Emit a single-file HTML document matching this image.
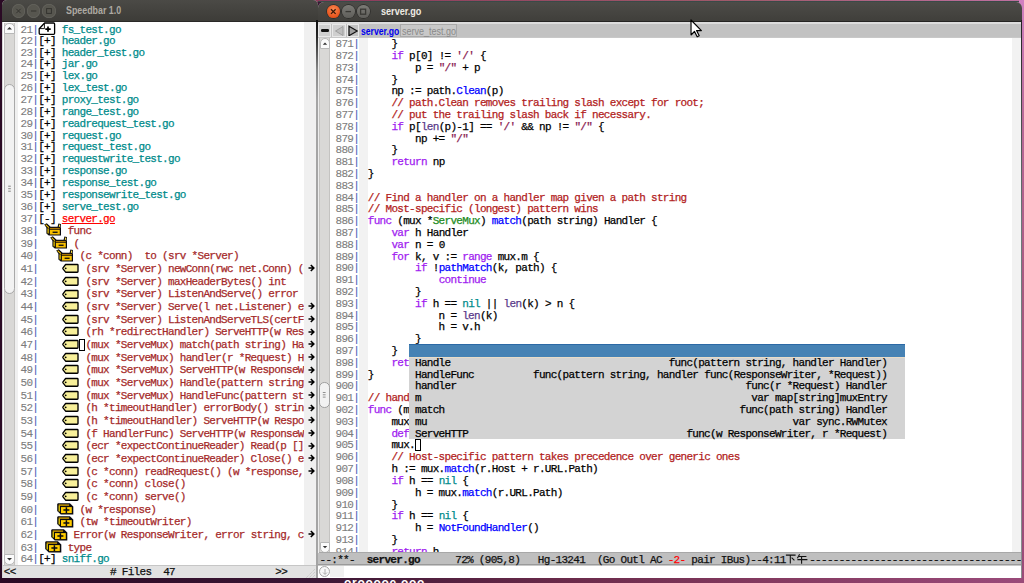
<!DOCTYPE html><html><head><meta charset="utf-8"><style>
*{margin:0;padding:0;box-sizing:border-box}
html,body{width:1024px;height:583px;overflow:hidden;background:#2d0b27;position:relative}
.a{position:absolute}
.m{position:absolute;font-family:"Liberation Mono", monospace;font-size:11.0px;letter-spacing:-0.7px;white-space:pre;line-height:12px;color:#000;-webkit-text-stroke-width:0.25px}
i{font-style:normal}
.k{color:#a020f0} .f{color:#0000ff} .t{color:#228b22} .c{color:#b22222} .s{color:#8b2252}
.n{color:#008b8b} .b{color:#5a3a8a} .g{color:#7c7c7c;-webkit-text-stroke-width:0.1px} .p{color:#4a5cb8;-webkit-text-stroke-width:0.1px}
.fn{color:#008b8b} .tg{color:#a52a2a} .sel{color:#ff0000;text-decoration:underline}
.sans{font-family:"Liberation Sans",sans-serif}
</style></head><body>
<div class="a" style="left:0;top:0;width:1024px;height:583px;background:linear-gradient(90deg,#2a0a24 0%,#3a1634 30%,#6a2a4a 55%,#843a60 75%,#9a4a7a 100%)"></div>
<div class="a" style="left:300px;top:0;width:724px;height:1.6px;background:linear-gradient(90deg,#8a3a5a,#a05a6a 60%,#c070a0)"></div>
<div class="a" style="left:318px;top:1.2px;width:703px;height:1px;background:#3a4a48"></div>
<div class="a" style="left:1019px;top:0;width:5px;height:583px;background:linear-gradient(180deg,#d080c0 0%,#b86a98 20%,#a85a80 50%,#9a4a78 100%)"></div>
<div class="a" style="left:2px;top:0;width:316px;height:578px;background:#d6d6d6;border-radius:5px 5px 0 0;overflow:hidden">
<div class="a" style="left:0;top:0;width:100%;height:22px;background:linear-gradient(180deg,#4b4a46,#3c3b37)"></div>
<div class="a" style="left:0;top:21px;width:100%;height:1px;background:#2a2927"></div>
</div>
<div class="a" style="left:11.9px;top:4.4px;width:13.2px;height:13.2px;border-radius:50%;background:#57564f;box-shadow:inset 0 0 0 0.8px #64635d"></div>
<div class="a" style="left:27.1px;top:4.4px;width:13.2px;height:13.2px;border-radius:50%;background:#57564f;box-shadow:inset 0 0 0 0.8px #64635d"></div>
<div class="a" style="left:42.4px;top:4.4px;width:13.2px;height:13.2px;border-radius:50%;background:#57564f;box-shadow:inset 0 0 0 0.8px #64635d"></div>
<svg class="a" style="left:0;top:0" width="80" height="22"><g stroke="#34332f" stroke-width="1.0" fill="none"><path d="M16.3 8.8 L20.7 13.2 M20.7 8.8 L16.3 13.2"/><path d="M31 11 L36.4 11"/><rect x="46.6" y="8.6" width="4.8" height="4.8"/></g></svg>
<div class="a sans" style="left:66.2px;top:4.8px;font-size:10px;line-height:11px;font-weight:bold;color:#aeaaa2;white-space:pre;transform:scaleX(0.885);transform-origin:0 0">Speedbar 1.0</div>
<div class="a" style="left:3px;top:22px;width:313px;height:543px;background:#fff"></div>
<div class="a" style="left:3.5px;top:22.5px;width:11.5px;height:542px;background:#d9d8d6;border-left:1px solid #c4c3c1;border-right:1px solid #c4c3c1"></div>
<div class="a" style="left:4px;top:22.5px;width:11px;height:11px;background:#fbfbfb;border:1px solid #b8b8b8;border-radius:5px 5px 0 0"></div>
<svg class="a" style="left:4px;top:22px" width="11" height="12"><path d="M3 7.5 L5.5 5 L8 7.5Z" fill="#333"/></svg>
<div class="a" style="left:4px;top:84.4px;width:11px;height:210px;background:#f2f2f2;border:1px solid #a9a9a9;border-radius:5.5px"></div>
<svg class="a" style="left:4px;top:180px" width="11" height="16"><g stroke="#7a7a7a" stroke-width="0.9"><path d="M4.2 6.2 L6.8 6.2 M4.2 8.7 L6.8 8.7 M4.2 11.2 L6.8 11.2"/></g></svg>
<div class="a" style="left:4px;top:554px;width:11px;height:11px;background:#fbfbfb;border:1px solid #b8b8b8;border-radius:0 0 5px 5px"></div>
<svg class="a" style="left:4px;top:554px" width="11" height="11"><path d="M3 4 L5.5 6.5 L8 4Z" fill="#333"/></svg>
<div class="a" style="left:15px;top:22px;width:3px;height:543px;background:#f0f0f0"></div>
<div class="a" style="left:304px;top:22px;width:11.5px;height:543px;background:#f0f0f0"></div>
<div class="a" style="left:315.8px;top:22px;width:1.2px;height:556px;background:#a8a8a8"></div>
<div class="a" style="left:3px;top:565px;width:313px;height:12.8px;background:#e2e2e2;border-top:1px solid #c6c6c6"></div>
<div class="m" style="left:3.8px;top:565.5px;color:#111">&lt;&lt;                # Files  47                 &gt;&gt;</div>
<svg class="a" style="left:303px;top:566px" width="13" height="12"><g stroke="#b8b8b8" stroke-width="0.8" stroke-dasharray="1 1"><path d="M12 3 L3 12 M12 6 L6 12 M12 9 L9 12"/></g></svg>
<div class="a" style="left:0;top:0;width:304px;height:565px;overflow:hidden">
<div class="m" style="left:20.5px;top:23.80px"><i class="g">21</i><i class="p">|</i></div>
<div class="m fn" style="left:61.80px;top:23.80px">fs_test.go</div>
<svg class="a" style="left:37.8px;top:22.2px" width="18" height="13" viewBox="0 0 18 13"><path d="M1.2 6.8 L6.6 1 L15.6 1 Q16.6 1 16.6 2 L16.6 11.2 Q16.6 12.3 15.6 12.3 L2.2 12.3 Q1.2 12.3 1.2 11.3 Z" fill="#fff" stroke="#000" stroke-width="1.3" stroke-linejoin="round"/><path d="M1.4 6.6 L6.4 6.6 L6.4 1.2" fill="none" stroke="#000" stroke-width="0.9"/><path d="M10 4.4 L10 9.8 M7.3 7.1 L12.7 7.1" stroke="#000" stroke-width="1.7"/></svg>
<div class="m" style="left:20.5px;top:34.80px"><i class="g">22</i><i class="p">|</i></div>
<div class="m" style="left:38.20px;top:34.80px">[+] <i class="fn">header.go</i></div>
<div class="m" style="left:20.5px;top:46.65px"><i class="g">23</i><i class="p">|</i></div>
<div class="m" style="left:38.20px;top:46.65px">[+] <i class="fn">header_test.go</i></div>
<div class="m" style="left:20.5px;top:58.49px"><i class="g">24</i><i class="p">|</i></div>
<div class="m" style="left:38.20px;top:58.49px">[+] <i class="fn">jar.go</i></div>
<div class="m" style="left:20.5px;top:70.34px"><i class="g">25</i><i class="p">|</i></div>
<div class="m" style="left:38.20px;top:70.34px">[+] <i class="fn">lex.go</i></div>
<div class="m" style="left:20.5px;top:82.19px"><i class="g">26</i><i class="p">|</i></div>
<div class="m" style="left:38.20px;top:82.19px">[+] <i class="fn">lex_test.go</i></div>
<div class="m" style="left:20.5px;top:94.03px"><i class="g">27</i><i class="p">|</i></div>
<div class="m" style="left:38.20px;top:94.03px">[+] <i class="fn">proxy_test.go</i></div>
<div class="m" style="left:20.5px;top:105.88px"><i class="g">28</i><i class="p">|</i></div>
<div class="m" style="left:38.20px;top:105.88px">[+] <i class="fn">range_test.go</i></div>
<div class="m" style="left:20.5px;top:117.73px"><i class="g">29</i><i class="p">|</i></div>
<div class="m" style="left:38.20px;top:117.73px">[+] <i class="fn">readrequest_test.go</i></div>
<div class="m" style="left:20.5px;top:129.58px"><i class="g">30</i><i class="p">|</i></div>
<div class="m" style="left:38.20px;top:129.58px">[+] <i class="fn">request.go</i></div>
<div class="m" style="left:20.5px;top:141.42px"><i class="g">31</i><i class="p">|</i></div>
<div class="m" style="left:38.20px;top:141.42px">[+] <i class="fn">request_test.go</i></div>
<div class="m" style="left:20.5px;top:153.27px"><i class="g">32</i><i class="p">|</i></div>
<div class="m" style="left:38.20px;top:153.27px">[+] <i class="fn">requestwrite_test.go</i></div>
<div class="m" style="left:20.5px;top:165.12px"><i class="g">33</i><i class="p">|</i></div>
<div class="m" style="left:38.20px;top:165.12px">[+] <i class="fn">response.go</i></div>
<div class="m" style="left:20.5px;top:176.96px"><i class="g">34</i><i class="p">|</i></div>
<div class="m" style="left:38.20px;top:176.96px">[+] <i class="fn">response_test.go</i></div>
<div class="m" style="left:20.5px;top:188.81px"><i class="g">35</i><i class="p">|</i></div>
<div class="m" style="left:38.20px;top:188.81px">[+] <i class="fn">responsewrite_test.go</i></div>
<div class="m" style="left:20.5px;top:200.66px"><i class="g">36</i><i class="p">|</i></div>
<div class="m" style="left:38.20px;top:200.66px">[+] <i class="fn">serve_test.go</i></div>
<div class="m" style="left:20.5px;top:212.50px"><i class="g">37</i><i class="p">|</i></div>
<div class="m" style="left:38.20px;top:212.50px">[-] <i class="sel">server.go</i></div>
<div class="m" style="left:20.5px;top:225.10px"><i class="g">38</i><i class="p">|</i></div>
<svg class="a" style="left:44.00px;top:223.20px" width="18" height="13" viewBox="0 0 18 13">
<path d="M0.2 1.4 L2.8 0.3 L6.6 3.8 L13.6 3.8 L14.4 0.4 L17 0.9 L16.7 4.4 L17 4.8 L17 12.6 L4.8 12.6 L2.4 10.6 L2.4 4.8 Z" fill="#0a0a10"/>
<path d="M1.6 1.6 L4.8 4.6" stroke="#ffcc00" stroke-width="1.1"/>
<path d="M15.7 1.6 L15.3 3.9" stroke="#ffe040" stroke-width="1.1"/>
<rect x="5.8" y="4.9" width="10" height="1.4" fill="#a87400"/>
<rect x="3.5" y="5.4" width="1.2" height="5" fill="#ffd400"/>
<rect x="5.9" y="6.9" width="9.9" height="4.6" fill="#f8c000"/>
<rect x="8.6" y="8.6" width="5" height="1.3" fill="#0a0a10"/>
</svg>
<div class="m tg" style="left:67.70px;top:225.10px">func</div>
<div class="m" style="left:20.5px;top:237.76px"><i class="g">39</i><i class="p">|</i></div>
<svg class="a" style="left:49.90px;top:235.86px" width="18" height="13" viewBox="0 0 18 13">
<path d="M0.2 1.4 L2.8 0.3 L6.6 3.8 L13.6 3.8 L14.4 0.4 L17 0.9 L16.7 4.4 L17 4.8 L17 12.6 L4.8 12.6 L2.4 10.6 L2.4 4.8 Z" fill="#0a0a10"/>
<path d="M1.6 1.6 L4.8 4.6" stroke="#ffcc00" stroke-width="1.1"/>
<path d="M15.7 1.6 L15.3 3.9" stroke="#ffe040" stroke-width="1.1"/>
<rect x="5.8" y="4.9" width="10" height="1.4" fill="#a87400"/>
<rect x="3.5" y="5.4" width="1.2" height="5" fill="#ffd400"/>
<rect x="5.9" y="6.9" width="9.9" height="4.6" fill="#f8c000"/>
<rect x="8.6" y="8.6" width="5" height="1.3" fill="#0a0a10"/>
</svg>
<div class="m tg" style="left:73.60px;top:237.76px">(</div>
<div class="m" style="left:20.5px;top:250.42px"><i class="g">40</i><i class="p">|</i></div>
<svg class="a" style="left:55.80px;top:248.52px" width="18" height="13" viewBox="0 0 18 13">
<path d="M0.2 1.4 L2.8 0.3 L6.6 3.8 L13.6 3.8 L14.4 0.4 L17 0.9 L16.7 4.4 L17 4.8 L17 12.6 L4.8 12.6 L2.4 10.6 L2.4 4.8 Z" fill="#0a0a10"/>
<path d="M1.6 1.6 L4.8 4.6" stroke="#ffcc00" stroke-width="1.1"/>
<path d="M15.7 1.6 L15.3 3.9" stroke="#ffe040" stroke-width="1.1"/>
<rect x="5.8" y="4.9" width="10" height="1.4" fill="#a87400"/>
<rect x="3.5" y="5.4" width="1.2" height="5" fill="#ffd400"/>
<rect x="5.9" y="6.9" width="9.9" height="4.6" fill="#f8c000"/>
<rect x="8.6" y="8.6" width="5" height="1.3" fill="#0a0a10"/>
</svg>
<div class="m tg" style="left:79.50px;top:250.42px">(c *conn)  to (srv *Server)</div>
<div class="m" style="left:20.5px;top:263.08px"><i class="g">41</i><i class="p">|</i></div>
<svg class="a" style="left:61.60px;top:263.18px" width="17" height="10" viewBox="0 0 17 10">
<path d="M3.6 1.5 L15.3 1.5 Q16 1.5 16 2.2 L16 8.5 Q16 9.2 15.3 9.2 L3.6 9.2 L1 5.8 Q0.7 5.35 1 4.9 Z" fill="#f8f09a" stroke="#000" stroke-width="1.35" stroke-linejoin="round"/>
<circle cx="3.7" cy="5.35" r="0.9" fill="#000"/>
</svg>
<div class="m tg" style="left:85.40px;top:263.08px">(srv *Server) newConn(rwc net.Conn) (c</div>
<div class="m" style="left:20.5px;top:275.74px"><i class="g">42</i><i class="p">|</i></div>
<svg class="a" style="left:61.60px;top:275.84px" width="17" height="10" viewBox="0 0 17 10">
<path d="M3.6 1.5 L15.3 1.5 Q16 1.5 16 2.2 L16 8.5 Q16 9.2 15.3 9.2 L3.6 9.2 L1 5.8 Q0.7 5.35 1 4.9 Z" fill="#f8f09a" stroke="#000" stroke-width="1.35" stroke-linejoin="round"/>
<circle cx="3.7" cy="5.35" r="0.9" fill="#000"/>
</svg>
<div class="m tg" style="left:85.40px;top:275.74px">(srv *Server) maxHeaderBytes() int</div>
<div class="m" style="left:20.5px;top:288.40px"><i class="g">43</i><i class="p">|</i></div>
<svg class="a" style="left:61.60px;top:288.50px" width="17" height="10" viewBox="0 0 17 10">
<path d="M3.6 1.5 L15.3 1.5 Q16 1.5 16 2.2 L16 8.5 Q16 9.2 15.3 9.2 L3.6 9.2 L1 5.8 Q0.7 5.35 1 4.9 Z" fill="#f8f09a" stroke="#000" stroke-width="1.35" stroke-linejoin="round"/>
<circle cx="3.7" cy="5.35" r="0.9" fill="#000"/>
</svg>
<div class="m tg" style="left:85.40px;top:288.40px">(srv *Server) ListenAndServe() error</div>
<div class="m" style="left:20.5px;top:301.06px"><i class="g">44</i><i class="p">|</i></div>
<svg class="a" style="left:61.60px;top:301.16px" width="17" height="10" viewBox="0 0 17 10">
<path d="M3.6 1.5 L15.3 1.5 Q16 1.5 16 2.2 L16 8.5 Q16 9.2 15.3 9.2 L3.6 9.2 L1 5.8 Q0.7 5.35 1 4.9 Z" fill="#f8f09a" stroke="#000" stroke-width="1.35" stroke-linejoin="round"/>
<circle cx="3.7" cy="5.35" r="0.9" fill="#000"/>
</svg>
<div class="m tg" style="left:85.40px;top:301.06px">(srv *Server) Serve(l net.Listener) error</div>
<div class="m" style="left:20.5px;top:313.72px"><i class="g">45</i><i class="p">|</i></div>
<svg class="a" style="left:61.60px;top:313.82px" width="17" height="10" viewBox="0 0 17 10">
<path d="M3.6 1.5 L15.3 1.5 Q16 1.5 16 2.2 L16 8.5 Q16 9.2 15.3 9.2 L3.6 9.2 L1 5.8 Q0.7 5.35 1 4.9 Z" fill="#f8f09a" stroke="#000" stroke-width="1.35" stroke-linejoin="round"/>
<circle cx="3.7" cy="5.35" r="0.9" fill="#000"/>
</svg>
<div class="m tg" style="left:85.40px;top:313.72px">(srv *Server) ListenAndServeTLS(certFile</div>
<div class="m" style="left:20.5px;top:326.38px"><i class="g">46</i><i class="p">|</i></div>
<svg class="a" style="left:61.60px;top:326.48px" width="17" height="10" viewBox="0 0 17 10">
<path d="M3.6 1.5 L15.3 1.5 Q16 1.5 16 2.2 L16 8.5 Q16 9.2 15.3 9.2 L3.6 9.2 L1 5.8 Q0.7 5.35 1 4.9 Z" fill="#f8f09a" stroke="#000" stroke-width="1.35" stroke-linejoin="round"/>
<circle cx="3.7" cy="5.35" r="0.9" fill="#000"/>
</svg>
<div class="m tg" style="left:85.40px;top:326.38px">(rh *redirectHandler) ServeHTTP(w ResponseWriter</div>
<div class="m" style="left:20.5px;top:339.04px"><i class="g">47</i><i class="p">|</i></div>
<svg class="a" style="left:61.60px;top:339.14px" width="17" height="10" viewBox="0 0 17 10">
<path d="M3.6 1.5 L15.3 1.5 Q16 1.5 16 2.2 L16 8.5 Q16 9.2 15.3 9.2 L3.6 9.2 L1 5.8 Q0.7 5.35 1 4.9 Z" fill="#f8f09a" stroke="#000" stroke-width="1.35" stroke-linejoin="round"/>
<circle cx="3.7" cy="5.35" r="0.9" fill="#000"/>
</svg>
<div class="m tg" style="left:85.40px;top:339.04px">(mux *ServeMux) match(path string) Handler</div>
<div class="m" style="left:20.5px;top:351.70px"><i class="g">48</i><i class="p">|</i></div>
<svg class="a" style="left:61.60px;top:351.80px" width="17" height="10" viewBox="0 0 17 10">
<path d="M3.6 1.5 L15.3 1.5 Q16 1.5 16 2.2 L16 8.5 Q16 9.2 15.3 9.2 L3.6 9.2 L1 5.8 Q0.7 5.35 1 4.9 Z" fill="#f8f09a" stroke="#000" stroke-width="1.35" stroke-linejoin="round"/>
<circle cx="3.7" cy="5.35" r="0.9" fill="#000"/>
</svg>
<div class="m tg" style="left:85.40px;top:351.70px">(mux *ServeMux) handler(r *Request) Handler</div>
<div class="m" style="left:20.5px;top:364.36px"><i class="g">49</i><i class="p">|</i></div>
<svg class="a" style="left:61.60px;top:364.46px" width="17" height="10" viewBox="0 0 17 10">
<path d="M3.6 1.5 L15.3 1.5 Q16 1.5 16 2.2 L16 8.5 Q16 9.2 15.3 9.2 L3.6 9.2 L1 5.8 Q0.7 5.35 1 4.9 Z" fill="#f8f09a" stroke="#000" stroke-width="1.35" stroke-linejoin="round"/>
<circle cx="3.7" cy="5.35" r="0.9" fill="#000"/>
</svg>
<div class="m tg" style="left:85.40px;top:364.36px">(mux *ServeMux) ServeHTTP(w ResponseWriter</div>
<div class="m" style="left:20.5px;top:377.02px"><i class="g">50</i><i class="p">|</i></div>
<svg class="a" style="left:61.60px;top:377.12px" width="17" height="10" viewBox="0 0 17 10">
<path d="M3.6 1.5 L15.3 1.5 Q16 1.5 16 2.2 L16 8.5 Q16 9.2 15.3 9.2 L3.6 9.2 L1 5.8 Q0.7 5.35 1 4.9 Z" fill="#f8f09a" stroke="#000" stroke-width="1.35" stroke-linejoin="round"/>
<circle cx="3.7" cy="5.35" r="0.9" fill="#000"/>
</svg>
<div class="m tg" style="left:85.40px;top:377.02px">(mux *ServeMux) Handle(pattern string</div>
<div class="m" style="left:20.5px;top:389.68px"><i class="g">51</i><i class="p">|</i></div>
<svg class="a" style="left:61.60px;top:389.78px" width="17" height="10" viewBox="0 0 17 10">
<path d="M3.6 1.5 L15.3 1.5 Q16 1.5 16 2.2 L16 8.5 Q16 9.2 15.3 9.2 L3.6 9.2 L1 5.8 Q0.7 5.35 1 4.9 Z" fill="#f8f09a" stroke="#000" stroke-width="1.35" stroke-linejoin="round"/>
<circle cx="3.7" cy="5.35" r="0.9" fill="#000"/>
</svg>
<div class="m tg" style="left:85.40px;top:389.68px">(mux *ServeMux) HandleFunc(pattern string</div>
<div class="m" style="left:20.5px;top:402.34px"><i class="g">52</i><i class="p">|</i></div>
<svg class="a" style="left:61.60px;top:402.44px" width="17" height="10" viewBox="0 0 17 10">
<path d="M3.6 1.5 L15.3 1.5 Q16 1.5 16 2.2 L16 8.5 Q16 9.2 15.3 9.2 L3.6 9.2 L1 5.8 Q0.7 5.35 1 4.9 Z" fill="#f8f09a" stroke="#000" stroke-width="1.35" stroke-linejoin="round"/>
<circle cx="3.7" cy="5.35" r="0.9" fill="#000"/>
</svg>
<div class="m tg" style="left:85.40px;top:402.34px">(h *timeoutHandler) errorBody() string</div>
<div class="m" style="left:20.5px;top:415.00px"><i class="g">53</i><i class="p">|</i></div>
<svg class="a" style="left:61.60px;top:415.10px" width="17" height="10" viewBox="0 0 17 10">
<path d="M3.6 1.5 L15.3 1.5 Q16 1.5 16 2.2 L16 8.5 Q16 9.2 15.3 9.2 L3.6 9.2 L1 5.8 Q0.7 5.35 1 4.9 Z" fill="#f8f09a" stroke="#000" stroke-width="1.35" stroke-linejoin="round"/>
<circle cx="3.7" cy="5.35" r="0.9" fill="#000"/>
</svg>
<div class="m tg" style="left:85.40px;top:415.00px">(h *timeoutHandler) ServeHTTP(w ResponseWriter</div>
<div class="m" style="left:20.5px;top:427.66px"><i class="g">54</i><i class="p">|</i></div>
<svg class="a" style="left:61.60px;top:427.76px" width="17" height="10" viewBox="0 0 17 10">
<path d="M3.6 1.5 L15.3 1.5 Q16 1.5 16 2.2 L16 8.5 Q16 9.2 15.3 9.2 L3.6 9.2 L1 5.8 Q0.7 5.35 1 4.9 Z" fill="#f8f09a" stroke="#000" stroke-width="1.35" stroke-linejoin="round"/>
<circle cx="3.7" cy="5.35" r="0.9" fill="#000"/>
</svg>
<div class="m tg" style="left:85.40px;top:427.66px">(f HandlerFunc) ServeHTTP(w ResponseWriter</div>
<div class="m" style="left:20.5px;top:440.32px"><i class="g">55</i><i class="p">|</i></div>
<svg class="a" style="left:61.60px;top:440.42px" width="17" height="10" viewBox="0 0 17 10">
<path d="M3.6 1.5 L15.3 1.5 Q16 1.5 16 2.2 L16 8.5 Q16 9.2 15.3 9.2 L3.6 9.2 L1 5.8 Q0.7 5.35 1 4.9 Z" fill="#f8f09a" stroke="#000" stroke-width="1.35" stroke-linejoin="round"/>
<circle cx="3.7" cy="5.35" r="0.9" fill="#000"/>
</svg>
<div class="m tg" style="left:85.40px;top:440.32px">(ecr *expectContinueReader) Read(p []byte</div>
<div class="m" style="left:20.5px;top:452.98px"><i class="g">56</i><i class="p">|</i></div>
<svg class="a" style="left:61.60px;top:453.08px" width="17" height="10" viewBox="0 0 17 10">
<path d="M3.6 1.5 L15.3 1.5 Q16 1.5 16 2.2 L16 8.5 Q16 9.2 15.3 9.2 L3.6 9.2 L1 5.8 Q0.7 5.35 1 4.9 Z" fill="#f8f09a" stroke="#000" stroke-width="1.35" stroke-linejoin="round"/>
<circle cx="3.7" cy="5.35" r="0.9" fill="#000"/>
</svg>
<div class="m tg" style="left:85.40px;top:452.98px">(ecr *expectContinueReader) Close() error</div>
<div class="m" style="left:20.5px;top:465.64px"><i class="g">57</i><i class="p">|</i></div>
<svg class="a" style="left:61.60px;top:465.74px" width="17" height="10" viewBox="0 0 17 10">
<path d="M3.6 1.5 L15.3 1.5 Q16 1.5 16 2.2 L16 8.5 Q16 9.2 15.3 9.2 L3.6 9.2 L1 5.8 Q0.7 5.35 1 4.9 Z" fill="#f8f09a" stroke="#000" stroke-width="1.35" stroke-linejoin="round"/>
<circle cx="3.7" cy="5.35" r="0.9" fill="#000"/>
</svg>
<div class="m tg" style="left:85.40px;top:465.64px">(c *conn) readRequest() (w *response, err</div>
<div class="m" style="left:20.5px;top:478.30px"><i class="g">58</i><i class="p">|</i></div>
<svg class="a" style="left:61.60px;top:478.40px" width="17" height="10" viewBox="0 0 17 10">
<path d="M3.6 1.5 L15.3 1.5 Q16 1.5 16 2.2 L16 8.5 Q16 9.2 15.3 9.2 L3.6 9.2 L1 5.8 Q0.7 5.35 1 4.9 Z" fill="#f8f09a" stroke="#000" stroke-width="1.35" stroke-linejoin="round"/>
<circle cx="3.7" cy="5.35" r="0.9" fill="#000"/>
</svg>
<div class="m tg" style="left:85.40px;top:478.30px">(c *conn) close()</div>
<div class="m" style="left:20.5px;top:490.96px"><i class="g">59</i><i class="p">|</i></div>
<svg class="a" style="left:61.60px;top:491.06px" width="17" height="10" viewBox="0 0 17 10">
<path d="M3.6 1.5 L15.3 1.5 Q16 1.5 16 2.2 L16 8.5 Q16 9.2 15.3 9.2 L3.6 9.2 L1 5.8 Q0.7 5.35 1 4.9 Z" fill="#f8f09a" stroke="#000" stroke-width="1.35" stroke-linejoin="round"/>
<circle cx="3.7" cy="5.35" r="0.9" fill="#000"/>
</svg>
<div class="m tg" style="left:85.40px;top:490.96px">(c *conn) serve()</div>
<div class="m" style="left:20.5px;top:503.62px"><i class="g">60</i><i class="p">|</i></div>
<svg class="a" style="left:56.80px;top:503.22px" width="17" height="12" viewBox="0 0 17 12">
<path d="M1 0.2 L12.9 0.2 L16.3 3.6 L16.3 11.6 L3.8 11.6 L0.2 8.1 L0.2 1 Z" fill="#0a0a10"/>
<rect x="1.7" y="1.5" width="10.4" height="1.2" fill="#f0b400"/>
<rect x="1.6" y="2.7" width="1.2" height="5.8" fill="#ffe000"/>
<rect x="4" y="4.1" width="10.8" height="6" fill="#ffcc00"/>
<path d="M9.4 4.2 L9.4 10 M6.4 7.1 L12.4 7.1" stroke="#0a0a10" stroke-width="1.5"/>
</svg>
<div class="m tg" style="left:79.50px;top:503.62px">(w *response)</div>
<div class="m" style="left:20.5px;top:516.28px"><i class="g">61</i><i class="p">|</i></div>
<svg class="a" style="left:56.80px;top:515.88px" width="17" height="12" viewBox="0 0 17 12">
<path d="M1 0.2 L12.9 0.2 L16.3 3.6 L16.3 11.6 L3.8 11.6 L0.2 8.1 L0.2 1 Z" fill="#0a0a10"/>
<rect x="1.7" y="1.5" width="10.4" height="1.2" fill="#f0b400"/>
<rect x="1.6" y="2.7" width="1.2" height="5.8" fill="#ffe000"/>
<rect x="4" y="4.1" width="10.8" height="6" fill="#ffcc00"/>
<path d="M9.4 4.2 L9.4 10 M6.4 7.1 L12.4 7.1" stroke="#0a0a10" stroke-width="1.5"/>
</svg>
<div class="m tg" style="left:79.50px;top:516.28px">(tw *timeoutWriter)</div>
<div class="m" style="left:20.5px;top:528.94px"><i class="g">62</i><i class="p">|</i></div>
<svg class="a" style="left:50.90px;top:528.54px" width="17" height="12" viewBox="0 0 17 12">
<path d="M1 0.2 L12.9 0.2 L16.3 3.6 L16.3 11.6 L3.8 11.6 L0.2 8.1 L0.2 1 Z" fill="#0a0a10"/>
<rect x="1.7" y="1.5" width="10.4" height="1.2" fill="#f0b400"/>
<rect x="1.6" y="2.7" width="1.2" height="5.8" fill="#ffe000"/>
<rect x="4" y="4.1" width="10.8" height="6" fill="#ffcc00"/>
<path d="M9.4 4.2 L9.4 10 M6.4 7.1 L12.4 7.1" stroke="#0a0a10" stroke-width="1.5"/>
</svg>
<div class="m tg" style="left:73.60px;top:528.94px">Error(w ResponseWriter, error string, code</div>
<div class="m" style="left:20.5px;top:541.60px"><i class="g">63</i><i class="p">|</i></div>
<svg class="a" style="left:45.00px;top:541.20px" width="17" height="12" viewBox="0 0 17 12">
<path d="M1 0.2 L12.9 0.2 L16.3 3.6 L16.3 11.6 L3.8 11.6 L0.2 8.1 L0.2 1 Z" fill="#0a0a10"/>
<rect x="1.7" y="1.5" width="10.4" height="1.2" fill="#f0b400"/>
<rect x="1.6" y="2.7" width="1.2" height="5.8" fill="#ffe000"/>
<rect x="4" y="4.1" width="10.8" height="6" fill="#ffcc00"/>
<path d="M9.4 4.2 L9.4 10 M6.4 7.1 L12.4 7.1" stroke="#0a0a10" stroke-width="1.5"/>
</svg>
<div class="m tg" style="left:67.70px;top:541.60px">type</div>
<div class="a" style="left:79.4px;top:339.24px;width:5.6px;height:11.4px;border:1.2px solid #000;background:#fff"></div>
<div class="m" style="left:20.5px;top:553.30px"><i class="g">64</i><i class="p">|</i></div>
<div class="m" style="left:38.20px;top:553.30px">[+] <i class="fn">sniff.go</i></div>
</div>
<svg class="a" style="left:307.5px;top:264.28px" width="8" height="9"><path d="M0.5 4 L5.5 4 M2.8 1 L5.8 4 L2.8 7" fill="none" stroke="#000" stroke-width="1.6"/></svg>
<svg class="a" style="left:307.5px;top:302.26px" width="8" height="9"><path d="M0.5 4 L5.5 4 M2.8 1 L5.8 4 L2.8 7" fill="none" stroke="#000" stroke-width="1.6"/></svg>
<svg class="a" style="left:307.5px;top:314.92px" width="8" height="9"><path d="M0.5 4 L5.5 4 M2.8 1 L5.8 4 L2.8 7" fill="none" stroke="#000" stroke-width="1.6"/></svg>
<svg class="a" style="left:307.5px;top:327.58px" width="8" height="9"><path d="M0.5 4 L5.5 4 M2.8 1 L5.8 4 L2.8 7" fill="none" stroke="#000" stroke-width="1.6"/></svg>
<svg class="a" style="left:307.5px;top:340.24px" width="8" height="9"><path d="M0.5 4 L5.5 4 M2.8 1 L5.8 4 L2.8 7" fill="none" stroke="#000" stroke-width="1.6"/></svg>
<svg class="a" style="left:307.5px;top:352.90px" width="8" height="9"><path d="M0.5 4 L5.5 4 M2.8 1 L5.8 4 L2.8 7" fill="none" stroke="#000" stroke-width="1.6"/></svg>
<svg class="a" style="left:307.5px;top:365.56px" width="8" height="9"><path d="M0.5 4 L5.5 4 M2.8 1 L5.8 4 L2.8 7" fill="none" stroke="#000" stroke-width="1.6"/></svg>
<svg class="a" style="left:307.5px;top:378.22px" width="8" height="9"><path d="M0.5 4 L5.5 4 M2.8 1 L5.8 4 L2.8 7" fill="none" stroke="#000" stroke-width="1.6"/></svg>
<svg class="a" style="left:307.5px;top:390.88px" width="8" height="9"><path d="M0.5 4 L5.5 4 M2.8 1 L5.8 4 L2.8 7" fill="none" stroke="#000" stroke-width="1.6"/></svg>
<svg class="a" style="left:307.5px;top:403.54px" width="8" height="9"><path d="M0.5 4 L5.5 4 M2.8 1 L5.8 4 L2.8 7" fill="none" stroke="#000" stroke-width="1.6"/></svg>
<svg class="a" style="left:307.5px;top:416.20px" width="8" height="9"><path d="M0.5 4 L5.5 4 M2.8 1 L5.8 4 L2.8 7" fill="none" stroke="#000" stroke-width="1.6"/></svg>
<svg class="a" style="left:307.5px;top:428.86px" width="8" height="9"><path d="M0.5 4 L5.5 4 M2.8 1 L5.8 4 L2.8 7" fill="none" stroke="#000" stroke-width="1.6"/></svg>
<svg class="a" style="left:307.5px;top:441.52px" width="8" height="9"><path d="M0.5 4 L5.5 4 M2.8 1 L5.8 4 L2.8 7" fill="none" stroke="#000" stroke-width="1.6"/></svg>
<svg class="a" style="left:307.5px;top:454.18px" width="8" height="9"><path d="M0.5 4 L5.5 4 M2.8 1 L5.8 4 L2.8 7" fill="none" stroke="#000" stroke-width="1.6"/></svg>
<svg class="a" style="left:307.5px;top:466.84px" width="8" height="9"><path d="M0.5 4 L5.5 4 M2.8 1 L5.8 4 L2.8 7" fill="none" stroke="#000" stroke-width="1.6"/></svg>
<svg class="a" style="left:307.5px;top:530.14px" width="8" height="9"><path d="M0.5 4 L5.5 4 M2.8 1 L5.8 4 L2.8 7" fill="none" stroke="#000" stroke-width="1.6"/></svg>
<div class="a" style="left:317.5px;top:1.6px;width:704.5px;height:576px;background:#c8c8c8;border-radius:6px 6px 0 0;overflow:hidden">
<div class="a" style="left:0;top:0;width:100%;height:20.6px;background:linear-gradient(180deg,#4d4c48,#3f3e3a)"></div>
<div class="a" style="left:0;top:19.8px;width:100%;height:1px;background:#252422"></div>
</div>
<div class="a" style="left:326.9px;top:5.2px;width:12.8px;height:12.8px;border-radius:50%;background:radial-gradient(circle at 50% 35%,#f98a54,#e9541c 70%,#c9440f);box-shadow:0 0 0 0.7px #2a2a28"></div>
<div class="a" style="left:341.9px;top:5.2px;width:12.8px;height:12.8px;border-radius:50%;background:linear-gradient(180deg,#7c7b76,#5f5e5a);box-shadow:0 0 0 0.7px #2a2a28"></div>
<div class="a" style="left:356.9px;top:5.2px;width:12.8px;height:12.8px;border-radius:50%;background:linear-gradient(180deg,#7c7b76,#5f5e5a);box-shadow:0 0 0 0.7px #2a2a28"></div>
<svg class="a" style="left:320px;top:0" width="60" height="22"><g fill="none" stroke-width="1.3"><path d="M331 9.3 L335.6 13.9 M335.6 9.3 L331 13.9" transform="translate(-320,0)" stroke="#3a1a0a"/><path d="M25.5 11.6 L31 11.6" stroke="#3a3935"/><rect x="40.6" y="9.2" width="5" height="5" stroke="#3a3935"/></g></svg>
<div class="a sans" style="left:380.9px;top:5.2px;font-size:11px;line-height:12px;font-weight:bold;color:#efebe4;white-space:pre;transform:scaleX(0.826);transform-origin:0 0">server.go</div>
<div class="a" style="left:318px;top:22.3px;width:703px;height:15.2px;background:#c2c2c2;border-top:2px solid #dcdcdc"></div>
<div class="a" style="left:318.3px;top:24px;width:12.5px;height:12.5px;background:#cfcfcf;border:0.6px solid #e8e8e8"></div>
<div class="a" style="left:320.8px;top:29.3px;width:8.5px;height:2.4px;background:#111;border-radius:1.2px"></div>
<div class="a" style="left:332.4px;top:24px;width:13.3px;height:12.5px;background:#cfcfcf;border:0.6px solid #e8e8e8"></div>
<svg class="a" style="left:332px;top:23.5px" width="28" height="14"><path d="M11 2.5 L3.5 7 L11 11.5 Z" fill="#bdbdbd" stroke="#9a9a9a" stroke-width="0.9"/><path d="M17 2.2 L25.2 7 L17 11.8 Z" fill="#a0a0a0" stroke="#111" stroke-width="1.2"/></svg>
<div class="a" style="left:346.5px;top:24px;width:12.5px;height:12.5px;border:0.6px solid #e8e8e8"></div>
<div class="a sans" style="left:360.5px;top:24.6px;font-size:10.5px;line-height:12px;font-weight:bold;color:#0000ee;white-space:pre;transform:scaleX(0.82);transform-origin:0 0">server.go</div>
<div class="a" style="left:400.4px;top:23.8px;width:57px;height:12.8px;background:#c8c8c8;border:1px solid #a9a9a9"></div>
<div class="a sans" style="left:402px;top:24.6px;font-size:10.5px;line-height:12px;color:#8a8a8a;white-space:pre;transform:scaleX(0.857);transform-origin:0 0">serve_test.go</div>
<div class="a" style="left:689.5px;top:23px;width:1px;height:13px;background:#e6e6e6"></div>
<div class="a" style="left:318px;top:37.5px;width:703px;height:515px;background:#fff"></div>
<div class="a" style="left:319.2px;top:37.5px;width:10.6px;height:515px;background:#d9d8d6;border-left:1px solid #c4c3c1;border-right:1px solid #c4c3c1"></div>
<div class="a" style="left:319.5px;top:38px;width:10px;height:11px;background:#fbfbfb;border:1px solid #b8b8b8;border-radius:5px 5px 0 0"></div>
<svg class="a" style="left:319.5px;top:38px" width="10" height="11"><path d="M2.8 6.8 L5 4.6 L7.2 6.8Z" fill="#333"/></svg>
<div class="a" style="left:319.3px;top:382px;width:10.5px;height:25.5px;background:#f2f2f2;border:1px solid #a0a0a0;border-radius:5.2px"></div>
<svg class="a" style="left:319.3px;top:382px" width="11" height="26"><g stroke="#777" stroke-width="0.8"><path d="M3.8 10.5 L6.6 10.5 M3.8 12.8 L6.6 12.8 M3.8 15.1 L6.6 15.1"/></g></svg>
<div class="a" style="left:319.5px;top:541.5px;width:10px;height:11px;background:#fbfbfb;border:1px solid #b8b8b8;border-radius:0 0 5px 5px"></div>
<svg class="a" style="left:319.5px;top:541.5px" width="10" height="11"><path d="M2.8 4 L5 6.2 L7.2 4Z" fill="#333"/></svg>
<div class="a" style="left:359px;top:37.5px;width:8.5px;height:515px;background:#f2f2f2"></div>
<div class="a" style="left:1012px;top:37.5px;width:9px;height:515px;background:#f2f2f2"></div>
<div class="a" style="left:318px;top:37.5px;width:703px;height:515px;overflow:hidden">
<div class="m" style="left:17.50px;top:0.60px"><i class="g">871</i><i class="p">|</i></div>
<div class="m" style="left:49.80px;top:0.60px">    }</div>
<div class="m" style="left:17.50px;top:12.40px"><i class="g">872</i><i class="p">|</i></div>
<div class="m" style="left:49.80px;top:12.40px">    <i class="k">if</i> p[0] != <i class="s">'/'</i> {</div>
<div class="m" style="left:17.50px;top:24.21px"><i class="g">873</i><i class="p">|</i></div>
<div class="m" style="left:49.80px;top:24.21px">        p = <i class="s">"/"</i> + p</div>
<div class="m" style="left:17.50px;top:36.01px"><i class="g">874</i><i class="p">|</i></div>
<div class="m" style="left:49.80px;top:36.01px">    }</div>
<div class="m" style="left:17.50px;top:47.82px"><i class="g">875</i><i class="p">|</i></div>
<div class="m" style="left:49.80px;top:47.82px">    np := path.<i class="f">Clean</i>(p)</div>
<div class="m" style="left:17.50px;top:59.63px"><i class="g">876</i><i class="p">|</i></div>
<div class="m" style="left:49.80px;top:59.63px">    <i class="c">// path.Clean removes trailing slash except for root;</i></div>
<div class="m" style="left:17.50px;top:71.43px"><i class="g">877</i><i class="p">|</i></div>
<div class="m" style="left:49.80px;top:71.43px">    <i class="c">// put the trailing slash back if necessary.</i></div>
<div class="m" style="left:17.50px;top:83.23px"><i class="g">878</i><i class="p">|</i></div>
<div class="m" style="left:49.80px;top:83.23px">    <i class="k">if</i> p[<i class="b">len</i>(p)-1] == <i class="s">'/'</i> &amp;&amp; np != <i class="s">"/"</i> {</div>
<div class="m" style="left:17.50px;top:95.04px"><i class="g">879</i><i class="p">|</i></div>
<div class="m" style="left:49.80px;top:95.04px">        np += <i class="s">"/"</i></div>
<div class="m" style="left:17.50px;top:106.84px"><i class="g">880</i><i class="p">|</i></div>
<div class="m" style="left:49.80px;top:106.84px">    }</div>
<div class="m" style="left:17.50px;top:118.65px"><i class="g">881</i><i class="p">|</i></div>
<div class="m" style="left:49.80px;top:118.65px">    <i class="k">return</i> np</div>
<div class="m" style="left:17.50px;top:130.45px"><i class="g">882</i><i class="p">|</i></div>
<div class="m" style="left:49.80px;top:130.45px">}</div>
<div class="m" style="left:17.50px;top:142.26px"><i class="g">883</i><i class="p">|</i></div>
<div class="m" style="left:17.50px;top:154.06px"><i class="g">884</i><i class="p">|</i></div>
<div class="m" style="left:49.80px;top:154.06px"><i class="c">// Find a handler on a handler map given a path string</i></div>
<div class="m" style="left:17.50px;top:165.87px"><i class="g">885</i><i class="p">|</i></div>
<div class="m" style="left:49.80px;top:165.87px"><i class="c">// Most-specific (longest) pattern wins</i></div>
<div class="m" style="left:17.50px;top:177.67px"><i class="g">886</i><i class="p">|</i></div>
<div class="m" style="left:49.80px;top:177.67px"><i class="k">func</i> (mux *<i class="t">ServeMux</i>) <i class="f">match</i>(path string) Handler {</div>
<div class="m" style="left:17.50px;top:189.48px"><i class="g">887</i><i class="p">|</i></div>
<div class="m" style="left:49.80px;top:189.48px">    <i class="k">var</i> h Handler</div>
<div class="m" style="left:17.50px;top:201.28px"><i class="g">888</i><i class="p">|</i></div>
<div class="m" style="left:49.80px;top:201.28px">    <i class="k">var</i> n = 0</div>
<div class="m" style="left:17.50px;top:213.09px"><i class="g">889</i><i class="p">|</i></div>
<div class="m" style="left:49.80px;top:213.09px">    <i class="k">for</i> k, v := <i class="k">range</i> mux.m {</div>
<div class="m" style="left:17.50px;top:224.89px"><i class="g">890</i><i class="p">|</i></div>
<div class="m" style="left:49.80px;top:224.89px">        <i class="k">if</i> !<i class="f">pathMatch</i>(k, path) {</div>
<div class="m" style="left:17.50px;top:236.70px"><i class="g">891</i><i class="p">|</i></div>
<div class="m" style="left:49.80px;top:236.70px">            <i class="k">continue</i></div>
<div class="m" style="left:17.50px;top:248.50px"><i class="g">892</i><i class="p">|</i></div>
<div class="m" style="left:49.80px;top:248.50px">        }</div>
<div class="m" style="left:17.50px;top:260.31px"><i class="g">893</i><i class="p">|</i></div>
<div class="m" style="left:49.80px;top:260.31px">        <i class="k">if</i> h == <i class="n">nil</i> || <i class="b">len</i>(k) &gt; n {</div>
<div class="m" style="left:17.50px;top:272.12px"><i class="g">894</i><i class="p">|</i></div>
<div class="m" style="left:49.80px;top:272.12px">            n = <i class="b">len</i>(k)</div>
<div class="m" style="left:17.50px;top:283.92px"><i class="g">895</i><i class="p">|</i></div>
<div class="m" style="left:49.80px;top:283.92px">            h = v.h</div>
<div class="m" style="left:17.50px;top:295.73px"><i class="g">896</i><i class="p">|</i></div>
<div class="m" style="left:49.80px;top:295.73px">        }</div>
<div class="m" style="left:17.50px;top:307.53px"><i class="g">897</i><i class="p">|</i></div>
<div class="m" style="left:49.80px;top:307.53px">    }</div>
<div class="m" style="left:17.50px;top:319.34px"><i class="g">898</i><i class="p">|</i></div>
<div class="m" style="left:49.80px;top:319.34px">    <i class="k">ret</i></div>
<div class="m" style="left:17.50px;top:331.14px"><i class="g">899</i><i class="p">|</i></div>
<div class="m" style="left:49.80px;top:331.14px">}</div>
<div class="m" style="left:17.50px;top:342.94px"><i class="g">900</i><i class="p">|</i></div>
<div class="m" style="left:17.50px;top:354.75px"><i class="g">901</i><i class="p">|</i></div>
<div class="m" style="left:49.80px;top:354.75px"><i class="c">// hand</i></div>
<div class="m" style="left:17.50px;top:366.56px"><i class="g">902</i><i class="p">|</i></div>
<div class="m" style="left:49.80px;top:366.56px"><i class="k">func</i> (m</div>
<div class="m" style="left:17.50px;top:378.36px"><i class="g">903</i><i class="p">|</i></div>
<div class="m" style="left:49.80px;top:378.36px">    mux</div>
<div class="m" style="left:17.50px;top:390.17px"><i class="g">904</i><i class="p">|</i></div>
<div class="m" style="left:49.80px;top:390.17px">    <i class="k">def</i></div>
<div class="m" style="left:17.50px;top:401.97px"><i class="g">905</i><i class="p">|</i></div>
<div class="m" style="left:49.80px;top:401.97px">    mux.</div>
<div class="m" style="left:17.50px;top:413.78px"><i class="g">906</i><i class="p">|</i></div>
<div class="m" style="left:49.80px;top:413.78px">    <i class="c">// Host-specific pattern takes precedence over generic ones</i></div>
<div class="m" style="left:17.50px;top:425.58px"><i class="g">907</i><i class="p">|</i></div>
<div class="m" style="left:49.80px;top:425.58px">    h := mux.<i class="f">match</i>(r.Host + r.URL.Path)</div>
<div class="m" style="left:17.50px;top:437.38px"><i class="g">908</i><i class="p">|</i></div>
<div class="m" style="left:49.80px;top:437.38px">    <i class="k">if</i> h == <i class="n">nil</i> {</div>
<div class="m" style="left:17.50px;top:449.19px"><i class="g">909</i><i class="p">|</i></div>
<div class="m" style="left:49.80px;top:449.19px">        h = mux.<i class="f">match</i>(r.URL.Path)</div>
<div class="m" style="left:17.50px;top:461.00px"><i class="g">910</i><i class="p">|</i></div>
<div class="m" style="left:49.80px;top:461.00px">    }</div>
<div class="m" style="left:17.50px;top:472.80px"><i class="g">911</i><i class="p">|</i></div>
<div class="m" style="left:49.80px;top:472.80px">    <i class="k">if</i> h == <i class="n">nil</i> {</div>
<div class="m" style="left:17.50px;top:484.61px"><i class="g">912</i><i class="p">|</i></div>
<div class="m" style="left:49.80px;top:484.61px">        h = <i class="f">NotFoundHandler</i>()</div>
<div class="m" style="left:17.50px;top:496.41px"><i class="g">913</i><i class="p">|</i></div>
<div class="m" style="left:49.80px;top:496.41px">    }</div>
<div class="m" style="left:17.50px;top:508.22px"><i class="g">914</i><i class="p">|</i></div>
<div class="m" style="left:49.80px;top:508.22px">    <i class="k">return</i> h</div>
</div>
<div class="a" style="left:408.50px;top:344.43px;width:496.60px;height:12.11px;background:#4682b4;border-top:1px solid #2c69a5"></div>
<div class="a" style="left:408.50px;top:356.54px;width:496.60px;height:1px;background:#e8dcc8"></div>
<div class="a" style="left:408.50px;top:357.54px;width:496.60px;height:81.33px;background:#d3d3d3"></div>
<div class="m" style="left:415.00px;top:356.84px">Handle</div>
<div class="m" style="left:668.70px;top:356.84px">func(pattern string, handler Handler)</div>
<div class="m" style="left:415.00px;top:368.64px">HandleFunc</div>
<div class="m" style="left:533.00px;top:368.64px">func(pattern string, handler func(ResponseWriter, *Request))</div>
<div class="m" style="left:415.00px;top:380.44px">handler</div>
<div class="m" style="left:745.40px;top:380.44px">func(r *Request) Handler</div>
<div class="m" style="left:415.00px;top:392.25px">m</div>
<div class="m" style="left:751.30px;top:392.25px">var map[string]muxEntry</div>
<div class="m" style="left:415.00px;top:404.06px">match</div>
<div class="m" style="left:739.50px;top:404.06px">func(path string) Handler</div>
<div class="m" style="left:415.00px;top:415.86px">mu</div>
<div class="m" style="left:792.60px;top:415.86px">var sync.RWMutex</div>
<div class="m" style="left:415.00px;top:427.67px">ServeHTTP</div>
<div class="m" style="left:686.40px;top:427.67px">func(w ResponseWriter, r *Request)</div>
<div class="a" style="left:414.9px;top:439.1px;width:6.1px;height:11.7px;border:1.2px solid #000"></div>
<div class="a" style="left:318px;top:552.4px;width:703px;height:13.1px;background:#bfbfbf;border-top:1px solid #a8a8a8;border-bottom:1px solid #9a9a9a"></div>
<div class="m" style="left:319.5px;top:554.0px;color:#111">--:**-  <b>server.go</b>      72% (905,8)   Hg-13241  (Go Outl AC <i style="color:#ff0000">-2-</i> pair IBus)--4:11</div>
<svg class="a" style="left:780px;top:550px" width="32" height="16"><g stroke="#111" stroke-width="1.1" fill="none"><path d="M5.9 5.1 L15.6 5.1 M10.3 5.1 L10.3 13.6 M11.6 7.6 L14.4 10.4"/><path d="M19.6 4.2 L17.4 8.2 M19 6.5 L26.4 6.5 M17.4 9.6 L27.4 9.6 M21.6 6.5 L21.6 13.8"/></g></svg>
<div class="m" style="left:809.20px;top:554.0px;color:#111">------------------------------------</div>
<div class="a" style="left:318px;top:565.5px;width:703px;height:12px;background:#fff"></div>
<div class="a" style="left:330px;top:566px;width:14px;height:11px;background:#f0f0f0"></div>
<div class="a" style="left:318.6px;top:566px;width:11.2px;height:11.2px;border-radius:50%;background:#f8f8f8;border:1px solid #a8a8a8"></div>
<svg class="a" style="left:318.6px;top:566px" width="12" height="12"><path d="M6 3 L6 8 M4 6.5 L6 8.5 L8 6.5" fill="none" stroke="#999" stroke-width="0.8"/></svg>
<div class="a" style="left:1021px;top:20px;width:1.2px;height:558px;background:linear-gradient(180deg,#222 0px,#333 40px,#6a7878 200px,#8a9090 100%)"></div>
<div class="a" style="left:0;top:577.5px;width:1024px;height:6px;overflow:hidden"><div class="a sans" style="left:344px;top:-2px;font-size:12px;color:#fff;font-weight:bold;white-space:pre;letter-spacing:0.7px">orooooe ooo</div></div>
<div class="a" style="left:315.9px;top:20px;width:2.1px;height:558px;background:linear-gradient(180deg,#0e0e0e 0px,#222 15px,#888 50px,#a4a4a4 80px,#a4a4a4 100%)"></div>
<div class="a" style="left:318px;top:37.5px;width:1.2px;height:515px;background:#ececec"></div>
<svg class="a" style="left:690px;top:19px" width="14" height="20"><path d="M1 1 L1 16 L4.5 12.5 L7.2 17.8 L9.2 16.8 L6.6 11.6 L11.4 11.6 Z" fill="#fff" stroke="#000" stroke-width="1.2" stroke-linejoin="round"/></svg>
</body></html>
